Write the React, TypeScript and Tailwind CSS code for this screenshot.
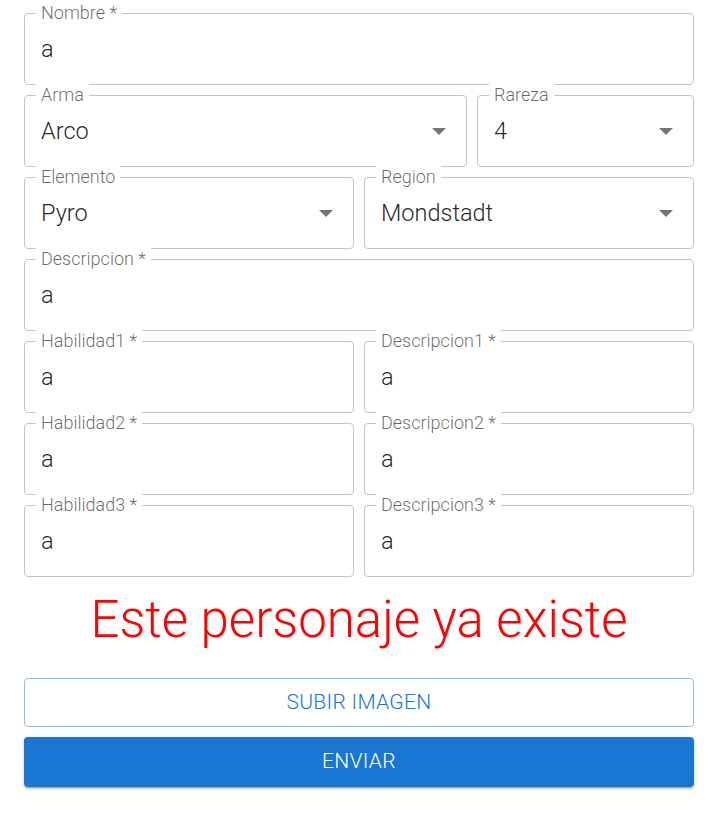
import React from 'react';

const font = { fontFamily: 'Roboto, "Liberation Sans", sans-serif' };

interface FieldProps {
  label: string;
  value: string;
  select?: boolean;
  className?: string;
}

function Field({ label, value, select, className = '' }: FieldProps) {
  return (
    <div className={`relative h-[72px] rounded-[4px] border border-[#c4c4c4] flex items-center pl-[16px] pr-[20px] ${className}`}>
      {/* floating label sits on the border */}
      <span className="absolute left-[11px] -top-[12px] bg-white px-[5px] text-[18px] leading-[21px] font-light text-[rgba(0,0,0,0.6)]">
        {label}
      </span>
      <span className="flex-1 text-[23.5px] leading-[28px] text-[rgba(0,0,0,0.87)] font-light">{value}</span>
      {select && (
        <svg width="14" height="7" viewBox="0 0 14 7" className="shrink-0">
          <path d="M0 0 L14 0 L7 7 Z" fill="#757575" />
        </svg>
      )}
    </div>
  );
}

export default function App() {
  return (
    <div className="w-[718px] min-h-[824px] bg-white px-[24px] pt-[13px]" style={font}>
      <div className="flex flex-col gap-[10px]">
        <Field label="Nombre *" value="a" />
        <div className="flex gap-[10px]">
          <Field label="Arma" value="Arco" select className="flex-1" />
          <Field label="Rareza" value="4" select className="w-[217px]" />
        </div>
        <div className="flex gap-[10px]">
          <Field label="Elemento" value="Pyro" select className="flex-1" />
          <Field label="Region" value="Mondstadt" select className="flex-1" />
        </div>
        <Field label="Descripcion *" value="a" />
        <div className="flex gap-[10px]">
          <Field label="Habilidad1 *" value="a" className="flex-1" />
          <Field label="Descripcion1 *" value="a" className="flex-1" />
        </div>
        <div className="flex gap-[10px]">
          <Field label="Habilidad2 *" value="a" className="flex-1" />
          <Field label="Descripcion2 *" value="a" className="flex-1" />
        </div>
        <div className="flex gap-[10px]">
          <Field label="Habilidad3 *" value="a" className="flex-1" />
          <Field label="Descripcion3 *" value="a" className="flex-1" />
        </div>
      </div>

      <p className="mt-[12px] text-center text-[51px] leading-[61px] font-light text-[#ff0000]">
        Este personaje ya existe
      </p>

      <div className="mt-[28px] flex flex-col gap-[10px]">
        <button className="h-[49px] w-full rounded-[4px] border border-[#8fbcec] bg-white text-[21px] font-light text-[#1976d2] uppercase tracking-[0.3px]">
          Subir imagen
        </button>
        <button className="h-[50px] w-full rounded-[4px] bg-[#1976d2] text-[21px] font-light text-white uppercase tracking-[0.3px] shadow-[0_3px_1px_-2px_rgba(0,0,0,0.2),0_2px_2px_0_rgba(0,0,0,0.14),0_1px_5px_0_rgba(0,0,0,0.12)]">
          Enviar
        </button>
      </div>
    </div>
  );
}
